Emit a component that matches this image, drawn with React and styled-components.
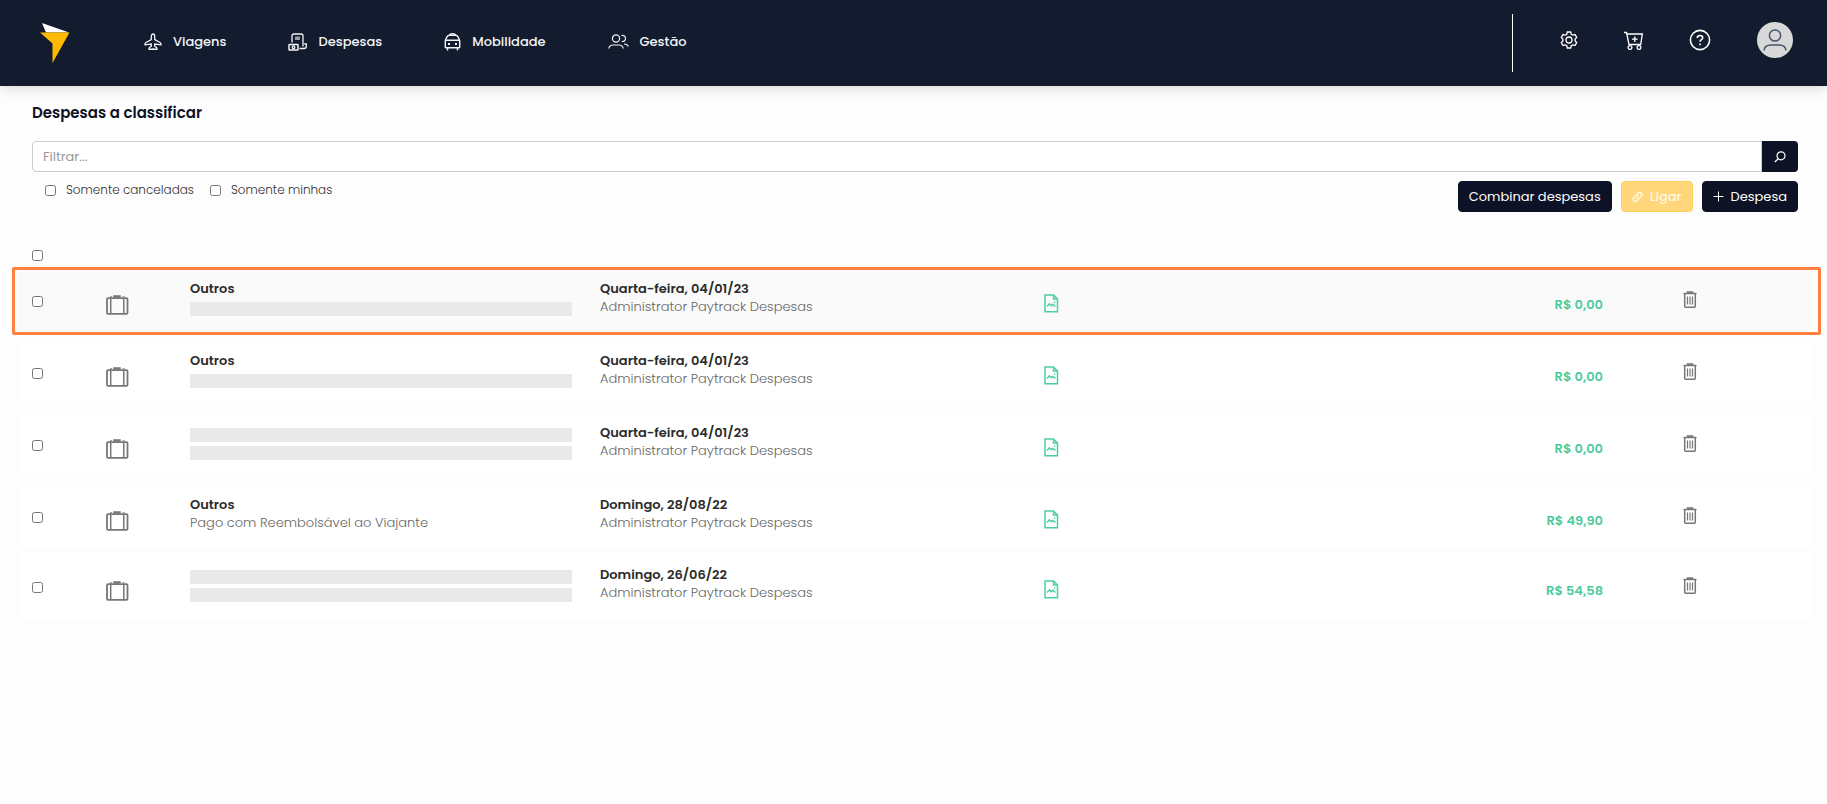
import React, { useState } from "react";
import styled, { createGlobalStyle } from "styled-components";

const NAV_LINKS = [
  { label: "Viagens", icon: PlaneIcon },
  { label: "Despesas", icon: ReceiptIcon },
  { label: "Mobilidade", icon: TaxiIcon },
  { label: "Gestão", icon: PeopleIcon },
];

// a null title or subtitle is drawn as a placeholder bar
const EXPENSES = [
  {
    id: 1,
    title: "Outros",
    subtitle: null,
    date: "Quarta-feira, 04/01/23",
    owner: "Administrator Paytrack Despesas",
    value: "R$ 0,00",
    highlighted: true,
  },
  {
    id: 2,
    title: "Outros",
    subtitle: null,
    date: "Quarta-feira, 04/01/23",
    owner: "Administrator Paytrack Despesas",
    value: "R$ 0,00",
  },
  {
    id: 3,
    title: null,
    subtitle: null,
    date: "Quarta-feira, 04/01/23",
    owner: "Administrator Paytrack Despesas",
    value: "R$ 0,00",
  },
  {
    id: 4,
    title: "Outros",
    subtitle: "Pago com Reembolsável ao Viajante",
    date: "Domingo, 28/08/22",
    owner: "Administrator Paytrack Despesas",
    value: "R$ 49,90",
    compact: true,
  },
  {
    id: 5,
    title: null,
    subtitle: null,
    date: "Domingo, 26/06/22",
    owner: "Administrator Paytrack Despesas",
    value: "R$ 54,58",
  },
];

export default function App() {
  const [selected, setSelected] = useState([]);
  const allSelected = selected.length === EXPENSES.length;

  const toggle = (id) =>
    setSelected(
      selected.includes(id)
        ? selected.filter((item) => item !== id)
        : [...selected, id]
    );

  const toggleAll = () =>
    setSelected(allSelected ? [] : EXPENSES.map((expense) => expense.id));

  return (
    <>
      <GlobalStyle />
      <Header>
        <LogoLink href="#" aria-label="Paytrack">
          <LogoIcon />
        </LogoLink>
        <Nav>
          {NAV_LINKS.map(({ label, icon: Icon }) => (
            <NavLink href="#" key={label}>
              <Icon />
              {label}
            </NavLink>
          ))}
        </Nav>
        <HeaderActions>
          <IconButton aria-label="Configurações">
            <GearIcon />
          </IconButton>
          <IconButton aria-label="Carrinho">
            <CartIcon />
          </IconButton>
          <IconButton aria-label="Ajuda">
            <HelpIcon />
          </IconButton>
          <AvatarButton aria-label="Perfil">
            <UserIcon />
          </AvatarButton>
        </HeaderActions>
      </Header>

      <main>
        <Toolbar>
          <Title>Despesas a classificar</Title>
          <SearchForm onSubmit={(e) => e.preventDefault()}>
            <SearchInput placeholder="Filtrar..." aria-label="Filtrar" />
            <SearchButton aria-label="Buscar">
              <SearchIcon />
            </SearchButton>
          </SearchForm>
          <Options>
            <Filters>
              <FilterLabel>
                <Checkbox />
                Somente canceladas
              </FilterLabel>
              <FilterLabel>
                <Checkbox />
                Somente minhas
              </FilterLabel>
            </Filters>
            <Buttons>
              <Button>Combinar despesas</Button>
              <Button $variant="warning" disabled>
                <LinkIcon />
                Ligar
              </Button>
              <Button>
                <PlusIcon />
                Despesa
              </Button>
            </Buttons>
          </Options>
        </Toolbar>

        <Table>
          <thead>
            <tr>
              <HeadCell>
                <Checkbox
                  aria-label="Selecionar todas"
                  checked={allSelected}
                  onChange={toggleAll}
                />
              </HeadCell>
            </tr>
          </thead>
          <TableBody>
            {EXPENSES.map((expense) => (
              <ExpenseRow
                key={expense.id}
                expense={expense}
                checked={selected.includes(expense.id)}
                onToggle={() => toggle(expense.id)}
              />
            ))}
          </TableBody>
        </Table>
      </main>
    </>
  );
}

function ExpenseRow({ expense, checked, onToggle }) {
  return (
    <Row $highlighted={expense.highlighted} $compact={expense.compact}>
      <CheckCell>
        <Checkbox
          aria-label="Selecionar despesa"
          checked={checked}
          onChange={onToggle}
        />
      </CheckCell>
      <CategoryCell>
        <SuitcaseIcon />
      </CategoryCell>
      <DetailsCell>
        {expense.title ? <Strong>{expense.title}</Strong> : <Placeholder />}
        {expense.subtitle ? (
          <Muted>{expense.subtitle}</Muted>
        ) : (
          <Placeholder />
        )}
      </DetailsCell>
      <TextCell>
        <Strong>{expense.date}</Strong>
        <Muted>{expense.owner}</Muted>
      </TextCell>
      <ReceiptCell>
        <FileImageIcon />
      </ReceiptCell>
      <ValueCell>{expense.value}</ValueCell>
      <DeleteCell>
        <IconButton aria-label="Excluir despesa">
          <TrashIcon />
        </IconButton>
      </DeleteCell>
    </Row>
  );
}

function LogoIcon() {
  return (
    <svg width="30" height="40" viewBox="0 0 30 40">
      <path d="M2 0 L29 9.5 H6 Z" fill="#fff" />
      <path d="M0 9.5 H29.5 L12.5 40 V20.5 Z" fill="#ffba00" />
    </svg>
  );
}

function PlaneIcon() {
  return (
    <Stroke width="18" height="18" viewBox="0 0 18 18" strokeWidth="1.3">
      <path d="M9 1C8 1 7.3 2 7.3 3.2V6.5L2 9.5Q1 10.2 1 11V11.8L7.3 11V13.2L5.5 14.4Q4.7 15.1 5 16.4L9 16L13 16.4Q13.3 15.1 12.5 14.4L10.7 13.2V11L17 11.8V11Q17 10.2 16 9.5L10.7 6.5V3.2C10.7 2 10 1 9 1Z" />
    </Stroke>
  );
}

function ReceiptIcon() {
  return (
    <Stroke width="19" height="18" viewBox="0 0 19 18" strokeWidth="1.3">
      <path d="M4 9.5V3Q4 1 6 1H13Q15 1 15 3V13.5" />
      <path d="M11.5 15.5H16Q18.3 15.5 18.3 13.5V10.8H16" />
      <rect x="7" y="3.5" width="5" height="3.5" fill="currentColor" stroke="none" opacity="0.6" />
      <rect x="1" y="11.5" width="9" height="5.5" rx="0.5" strokeWidth="1.5" />
      <circle cx="5.5" cy="14.2" r="1.3" />
    </Stroke>
  );
}

function TaxiIcon() {
  return (
    <Stroke width="17" height="18" viewBox="0 0 17 18" strokeWidth="1.4">
      <path d="M5.5 2Q5.8 0.8 8.5 0.8T11.5 2" />
      <path d="M1.3 14V7.5L3 3.8Q3.8 2.3 5.5 2.3H11.5Q13.2 2.3 14 3.8L15.7 7.5V14Q15.7 14.8 14.9 14.8H2.1Q1.3 14.8 1.3 14Z" />
      <path d="M2 7.2H15M3.5 15V17.6M13.5 15V17.6" />
      <path d="M4 11H6M11 11H13" strokeWidth="1.8" />
    </Stroke>
  );
}

function PeopleIcon() {
  return (
    <Stroke width="21" height="18" viewBox="0 0 21 18" strokeWidth="1.2">
      <circle cx="8" cy="5.5" r="3.6" />
      <path d="M0.8 15.5Q1.5 12 5 12H11Q14.5 12 15.2 15.5" />
      <path d="M13.5 2.5Q17.5 2 17.5 5.3Q17.5 8.6 13.8 8.5M16 11Q19.5 11 20.3 13.5" />
    </Stroke>
  );
}

function GearIcon() {
  return (
    <Stroke width="18" height="18" viewBox="0 0 18 18" strokeWidth="1.3">
      <path d="M7.3 1H10.7L11.2 3.2L12.8 4.1L15 3.5L16.7 6.4L15.1 8V10L16.7 11.6L15 14.5L12.8 13.9L11.2 14.8L10.7 17H7.3L6.8 14.8L5.2 13.9L3 14.5L1.3 11.6L2.9 10V8L1.3 6.4L3 3.5L5.2 4.1L6.8 3.2Z" />
      <circle cx="9" cy="9" r="3" />
    </Stroke>
  );
}

function CartIcon() {
  return (
    <Stroke width="19" height="19" viewBox="0 0 19 19" strokeWidth="1.3">
      <path d="M0 1.5H2.5L5 13.5H16.7L18.3 3H2.8" />
      <path d="M10.8 5.5V11M8 8.2H13.6" />
      <circle cx="6" cy="16.5" r="1.9" />
      <circle cx="15" cy="16.5" r="1.9" />
    </Stroke>
  );
}

function HelpIcon() {
  return (
    <Stroke width="22" height="22" viewBox="0 0 22 22" strokeWidth="1.6">
      <circle cx="11" cy="11" r="9.6" />
      <path d="M8.3 9Q8.3 6.5 11 6.5T13.7 8.8Q13.7 10 12.3 10.7Q11 11.4 11 12.8M11 14.6V16.2" />
    </Stroke>
  );
}

function UserIcon() {
  return (
    <Stroke width="24" height="24" viewBox="0 0 24 24" strokeWidth="1.5">
      <circle cx="12" cy="7.5" r="5.6" />
      <path d="M1 22.5Q1.5 17 8 17H16Q22.5 17 23 22.5" />
    </Stroke>
  );
}

function SearchIcon() {
  return (
    <Stroke width="12" height="12" viewBox="0 0 12 12" strokeWidth="1.2">
      <circle cx="7" cy="4.8" r="4" />
      <path d="M4.2 7.8L0.8 11" />
    </Stroke>
  );
}

function LinkIcon() {
  return (
    <Stroke width="11" height="12" viewBox="0 0 12 12" strokeWidth="1.7">
      <path d="M5 3.5L7 1.5Q8.5 0.3 10 1.8T10.3 5L8 7.3Q6.5 8.5 5 7" />
      <path d="M7 8.5L5 10.5Q3.5 11.7 2 10.2T1.7 7L4 4.7Q5.5 3.5 7 5" />
    </Stroke>
  );
}

function PlusIcon() {
  return (
    <Stroke width="11" height="11" viewBox="0 0 11 11" strokeWidth="1">
      <path d="M5.5 0.5V10.5M0.5 5.5H10.5" />
    </Stroke>
  );
}

function SuitcaseIcon() {
  return (
    <Stroke width="23" height="20" viewBox="0 0 23 20" strokeWidth="1.8">
      <path d="M8.5 2.5V1.5H13.5V2.5" strokeWidth="2.5" />
      <rect x="1" y="3.2" width="20.5" height="15.6" rx="1" />
      <path d="M4.7 3V19M17.8 3V19" strokeWidth="1.5" />
      <path d="M4 1.8H6M16.5 1.8H18.5" strokeWidth="1" />
    </Stroke>
  );
}

function FileImageIcon() {
  return (
    <Stroke width="15" height="19" viewBox="0 0 15 19" strokeWidth="1.5">
      <path d="M1 1H9.5L13.5 5V17.8H1ZM9.5 1V5H13.5" />
      <path d="M3 12.5L5.5 9.8L7.2 11.8L9 10.3L11.5 12.5M10 8H11.3" />
    </Stroke>
  );
}

function TrashIcon() {
  return (
    <Stroke width="14" height="17" viewBox="0 0 14 17" strokeWidth="1.5">
      <path d="M0.5 2.5H13.5M4.5 2.5V1H9.5V2.5" />
      <path d="M1.7 3V15.3Q1.7 16.2 2.6 16.2H11.4Q12.3 16.2 12.3 15.3V3" />
      <path d="M4.5 5.5V13.5M7 5.5V13.5M9.5 5.5V13.5" strokeWidth="1.2" />
    </Stroke>
  );
}

const GlobalStyle = createGlobalStyle`
  * {
    box-sizing: border-box;
  }
  body {
    margin: 0;
    background: #fdfdfd;
    color: #2b2b2b;
    font-family: Poppins, Inter, "Liberation Sans", sans-serif;
    font-size: 13px;
    line-height: 18px;
  }
  button,
  input {
    font: inherit;
  }
`;

const Stroke = styled.svg`
  display: block;
  flex: none;
  fill: none;
  stroke: currentColor;
`;

const Header = styled.header`
  display: flex;
  align-items: center;
  height: 86px;
  padding: 0 34px 0 40px;
  background: #131b2f;
  color: #fff;
  box-shadow: 0 2px 12px rgba(0, 0, 0, 0.15);
`;

const LogoLink = styled.a`
  display: flex;
  width: 30px;
`;

const Nav = styled.nav`
  display: flex;
  gap: 62px;
  margin-left: 74px;
  padding-bottom: 3px;
`;

const NavLink = styled.a`
  display: flex;
  align-items: center;
  gap: 11px;
  color: #f4f4f6;
  font-size: 13px;
  font-weight: 500;
  text-decoration: none;
`;

const HeaderActions = styled.div`
  display: flex;
  align-items: center;
  gap: 46px;
  height: 58px;
  margin-left: auto;
  padding: 0 0 6px 47px;
  border-left: 1px solid #fff;
`;

const IconButton = styled.button`
  display: flex;
  padding: 0;
  border: 0;
  background: none;
  color: inherit;
  cursor: pointer;
`;

const AvatarButton = styled(IconButton)`
  align-items: center;
  justify-content: center;
  width: 36px;
  height: 36px;
  border-radius: 50%;
  background: #d8d8d8;
  color: #46536b;
`;

const Toolbar = styled.section`
  padding: 15px 29px 0 32px;
`;

const Title = styled.h1`
  margin: 0 0 16px;
  color: #0e1226;
  font-size: 15px;
  font-weight: 600;
  line-height: 24px;
`;

const SearchForm = styled.form`
  display: flex;
`;

const SearchInput = styled.input`
  flex: 1;
  height: 31px;
  padding: 0 10px;
  border: 1px solid #ccc;
  border-radius: 4px 0 0 4px;
  background: #fff;
  &::placeholder {
    color: #999;
  }
`;

const SearchButton = styled(IconButton)`
  align-items: center;
  justify-content: center;
  width: 36px;
  border-radius: 0 4px 4px 0;
  background: #0e1226;
  color: #fff;
`;

const Options = styled.div`
  display: flex;
  justify-content: space-between;
  align-items: flex-start;
  padding-top: 9px;
`;

const Filters = styled.div`
  display: flex;
  gap: 16px;
  padding-left: 13px;
`;

const FilterLabel = styled.label`
  display: flex;
  align-items: center;
  gap: 10px;
  color: #333;
  font-size: 12px;
  font-weight: 300;
`;

const Checkbox = styled.input.attrs({ type: "checkbox" })`
  display: block;
  width: 11px;
  height: 11px;
  margin: 0;
`;

const Buttons = styled.div`
  display: flex;
  gap: 9px;
`;

const Button = styled.button`
  display: flex;
  align-items: center;
  gap: 7px;
  height: 31px;
  padding: 0 10px;
  border: 1px solid
    ${({ $variant }) => ($variant === "warning" ? "#ffd15c" : "#0e1226")};
  border-radius: 4px;
  background: ${({ $variant }) =>
    $variant === "warning" ? "#ffd77a" : "#0e1226"};
  color: ${({ $variant }) => ($variant === "warning" ? "#fff6e0" : "#fff")};
  font-weight: ${({ $variant }) => ($variant === "warning" ? 500 : 400)};
`;

const Table = styled.table`
  display: block;
  margin: 38px 16px 0 18px;
  border-spacing: 0;
`;

const HeadCell = styled.th`
  padding: 0 0 5px 14px;
`;

const TableBody = styled.tbody`
  display: flex;
  flex-direction: column;
  gap: 4px;
`;

const Row = styled.tr`
  position: relative;
  display: grid;
  grid-template-columns: 88px 84px 410fr 444fr 156fr 403fr 208px;
  height: ${({ $compact }) => ($compact ? "66px" : "68px")};
  border-radius: 6px;
  background: ${({ $highlighted }) => ($highlighted ? "#fafafa" : "#fff")};

  &::after {
    content: ${({ $highlighted }) => ($highlighted ? '""' : "none")};
    position: absolute;
    inset: 1px -10px -1px -6px;
    border: 3px solid #ff8040;
    border-radius: 2px;
    pointer-events: none;
  }
`;

const Cell = styled.td`
  padding: 0;
`;

const CheckCell = styled(Cell)`
  padding: 30px 0 0 14px;
`;

const CategoryCell = styled(Cell)`
  padding-top: 29px;
  color: #777;
`;

const TextCell = styled(Cell)`
  padding-top: 14px;
`;

const DetailsCell = styled(TextCell)`
  padding-right: 28px;
`;

const ReceiptCell = styled(Cell)`
  padding-top: 28px;
  color: #4ccfa1;
`;

const ValueCell = styled(Cell)`
  padding-top: 30px;
  color: #4ccb9c;
  font-weight: 600;
  text-align: right;
`;

const DeleteCell = styled(Cell)`
  padding: 25px 0 0 80px;
  color: #777;
`;

const Strong = styled.strong`
  display: block;
  font-weight: 600;
`;

const Muted = styled.span`
  display: block;
  color: #666;
  font-weight: 300;
`;

const Placeholder = styled.div`
  height: 14px;
  margin-top: 4px;
  background: #e9e9e9;
`;
